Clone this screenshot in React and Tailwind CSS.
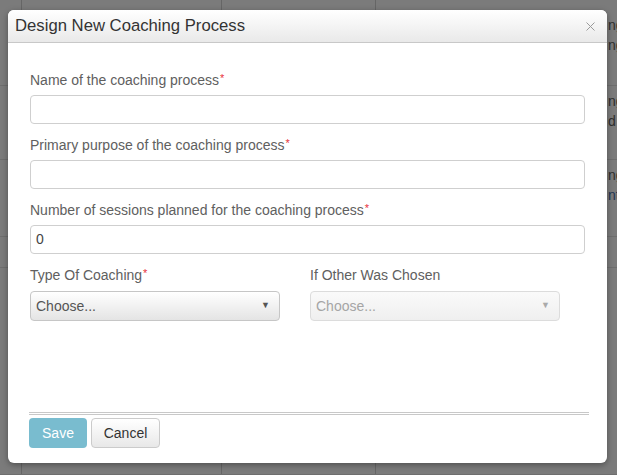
import { ChevronDown } from 'lucide-react';

const fields = [
  { label: 'Name of the coaching process', value: '' },
  { label: 'Primary purpose of the coaching process', value: '' },
  { label: 'Number of sessions planned for the coaching process', value: '0' },
];

function Req() {
  return <sup className="relative -top-[3px] ml-px text-[11px] text-[#e8323c]">*</sup>;
}

function Select({ disabled }) {
  return (
    <div
      className={
        'flex h-[30px] w-[250px] items-center justify-between rounded-[4px] border pl-[5px] pr-[9px] text-[14px] ' +
        (disabled
          ? 'border-[#dcdcdc] bg-[linear-gradient(180deg,#fafafa,#efefef)] text-[#a5a5a5]'
          : 'border-[#c6c6c6] bg-[linear-gradient(180deg,#ffffff,#e4e4e4)] text-[#555]')
      }
    >
      <span>Choose...</span>
      <span className={'text-[9px] ' + (disabled ? 'text-[#aaa]' : 'text-[#555]')}>▼</span>
    </div>
  );
}

function Backdrop() {
  const rows = [
    { h: 'h-[86px]', t: ['ng', 'ng'] },
    { h: 'h-[74px]', t: ['ng', 'd'] },
    { h: 'h-[77px]', t: ['ng', 'nt'] },
    { h: 'h-[31px]', t: [] },
    { h: 'flex-1', t: [] },
  ];
  return (
    <div className="flex h-[475px] w-[617px] flex-col bg-[#7b7b7b] font-['Liberation_Sans',Arial,sans-serif] text-[14px] text-[#2e2e2e]">
      {rows.map((r, i) => (
        <div key={i} className={'grid grid-cols-[22px_200px_154px_224px_17px] border-b border-[#6e6e6e] ' + r.h}>
          <div className="border-r border-[#666]" />
          <div className="border-r border-[#666]" />
          <div className="border-r border-[#666]" />
          <div />
          <div className={'overflow-hidden whitespace-nowrap pl-[8px] leading-[20px] ' + (i === 0 ? 'pt-[15px]' : 'pt-[5px]')}>
            {r.t.map((s, j) => (
              <div key={j} className={s === 'nt' ? 'text-[#1f3553]' : ''}>{s}</div>
            ))}
          </div>
        </div>
      ))}
    </div>
  );
}

export default function App() {
  return (
    <div className="relative h-[475px] w-[617px] overflow-hidden">
      <Backdrop />
      <div className="absolute left-[8px] top-[10px] flex h-[453px] w-[599px] flex-col rounded-[6px] bg-white font-['Liberation_Sans',Arial,sans-serif] shadow-[0_2px_6px_rgba(0,0,0,0.35)]">
        <div className="flex h-[33px] items-center justify-between rounded-t-[6px] border-b border-[#c8c8c8] bg-[linear-gradient(180deg,#ffffff,#e9e9e9)] pl-[7px] pr-[12px]">
          <h3 className="text-[16.7px] leading-none text-[#333]">Design New Coaching Process</h3>
          <svg width="9" height="9" viewBox="0 0 9 9" className="mt-[1px]">
            <path d="M0.5 0.5 L8.5 8.5 M8.5 0.5 L0.5 8.5" stroke="#9a9a9a" strokeWidth="1" />
          </svg>
        </div>
        <div className="flex flex-1 flex-col pl-[22px] pr-[18px] pt-[27px]">
          {fields.map((f) => (
            <div key={f.label} className="mr-[4px] mb-[11px]">
              <label className="mb-[5px] block text-[14px] leading-[20px] text-[#606060]">
                {f.label}
                <Req />
              </label>
              <div className="flex h-[29px] items-center rounded-[4px] border border-[#cfcfcf] bg-white px-[5px] text-[14px] text-[#444]">
                {f.value}
              </div>
            </div>
          ))}
          <div className="flex gap-[30px]">
            <div>
              <label className="mb-[6px] block text-[14px] leading-[20px] text-[#606060]">
                Type Of Coaching
                <Req />
              </label>
              <Select />
            </div>
            <div>
              <label className="mb-[6px] block text-[14px] leading-[20px] text-[#606060]">If Other Was Chosen</label>
              <Select disabled />
            </div>
          </div>
          <div className="mt-[91px] -ml-px border-t-[3px] border-double border-[#c8c8c8]" />
          <div className="-ml-px mt-[3px] flex gap-[4px]">
            <button className="h-[30px] w-[58px] rounded-[4px] bg-[#79bccf] text-[14px] text-white">Save</button>
            <button className="h-[30px] w-[69px] rounded-[4px] border border-[#cbcbcb] bg-[linear-gradient(180deg,#ffffff,#e8e8e8)] text-[14px] text-[#333]">
              Cancel
            </button>
          </div>
        </div>
      </div>
    </div>
  );
}
